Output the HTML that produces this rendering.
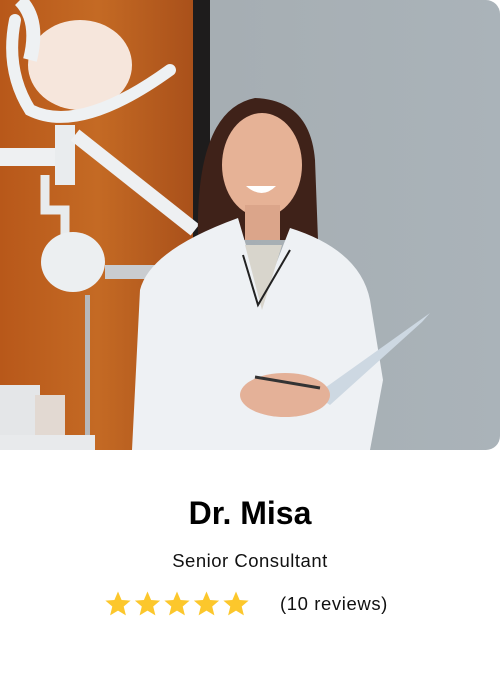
<!DOCTYPE html>
<html><head><meta charset="utf-8"><style>
html,body{margin:0;padding:0;background:#fff;width:500px;height:700px;overflow:hidden;font-family:"Liberation Sans",sans-serif}
.img{position:absolute;left:0;top:0;width:500px;height:450px;overflow:hidden;border-radius:0 14px 14px 0}
h1{position:absolute;top:493px;left:0;width:500px;text-align:center;margin:0;font-size:32px;font-weight:bold;color:#000;line-height:40px}
.sub{position:absolute;top:549px;left:0;width:500px;text-align:center;font-size:18.5px;letter-spacing:.5px;color:#111;line-height:24px}
.rev{position:absolute;top:592px;left:280px;font-size:18.5px;letter-spacing:.6px;color:#111;line-height:24px}
.stars{position:absolute;top:590px;left:104px}
</style></head><body>
<div class="img">
<svg width="500" height="450" viewBox="0 0 500 450">
<defs>
<linearGradient id="wall" x1="0" x2="1"><stop offset="0" stop-color="#a3aaae"/><stop offset="1" stop-color="#aab3b9"/></linearGradient>
<linearGradient id="wood" x1="0" x2="1"><stop offset="0" stop-color="#b8581a"/><stop offset=".5" stop-color="#c46a24"/><stop offset="1" stop-color="#a9501a"/></linearGradient>
</defs>
<rect width="500" height="450" fill="url(#wall)"/>
<rect width="195" height="450" fill="url(#wood)"/>
<rect x="193" width="17" height="450" fill="#1e1c1c"/>
<ellipse cx="80" cy="65" rx="52" ry="45" fill="#f6e6dc"/>
<path d="M15 20 Q5 70 30 110 Q80 135 170 70" stroke="#eef1f3" stroke-width="12" fill="none" stroke-linecap="round"/>
<path d="M20 0 Q40 20 30 60" stroke="#eef1f3" stroke-width="14" fill="none"/>
<rect x="0" y="148" width="75" height="18" fill="#eef0f2"/>
<rect x="55" y="125" width="20" height="60" fill="#e9ecee"/>
<path d="M75 135 L195 230" stroke="#eef0f2" stroke-width="14"/>
<path d="M45 175 L45 210 L65 210 L65 235" stroke="#e8ebed" stroke-width="9" fill="none"/>
<ellipse cx="73" cy="262" rx="32" ry="30" fill="#eceff1"/>
<rect x="105" y="265" width="55" height="14" fill="#c9ccd0"/>
<rect x="85" y="295" width="5" height="150" fill="#b7b8ba"/>
<rect x="0" y="385" width="40" height="65" fill="#e4e6e8"/>
<rect x="35" y="395" width="30" height="50" fill="#e2d9d2"/>
<rect x="0" y="435" width="95" height="15" fill="#e8eaec"/>
<path d="M198 240 Q195 110 255 98 Q310 100 315 160 L318 240 Z" fill="#3f2219"/>
<ellipse cx="262" cy="165" rx="40" ry="52" fill="#e6b296"/>
<rect x="245" y="205" width="35" height="35" fill="#dba58a"/>
<path d="M246 186 Q262 200 276 186 Z" fill="#fff"/>
<path d="M132 450 L140 290 Q150 250 238 218 L262 300 L290 228 Q360 250 370 300 L383 380 L370 450 Z" fill="#eef1f4"/>
<path d="M245 245 L262 310 L282 245 Z" fill="#d8d5cc"/>
<path d="M243 255 L258 305 L290 250" stroke="#222" stroke-width="2" fill="none"/>
<path d="M315 395 L430 313 L422 322 L330 405 Z" fill="#cdd8e2"/>
<ellipse cx="285" cy="395" rx="45" ry="22" fill="#e4b198"/>
<path d="M255 377 L320 388" stroke="#333" stroke-width="3"/>
</svg>
</div>
<h1>Dr. Misa</h1>
<div class="sub">Senior Consultant</div>
<svg class="stars" width="148" height="28" viewBox="0 0 148 28">
<defs><path id="s" d="M14 1.5 L17.6 10 L26.6 10.6 L19.7 16.5 L21.9 25.4 L14 20.6 L6.1 25.4 L8.3 16.5 L1.4 10.6 L10.4 10 Z" fill="#fcc72c"/></defs>
<use href="#s" x="0"/><use href="#s" x="29.5"/><use href="#s" x="59"/><use href="#s" x="88.5"/><use href="#s" x="118"/>
</svg>
<div class="rev">(10 reviews)</div>
</body></html>
